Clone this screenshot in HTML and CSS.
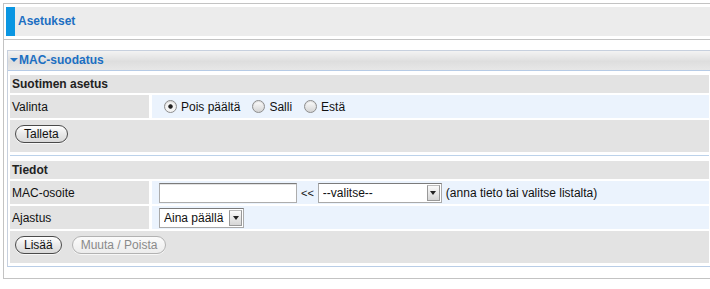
FILE: index.html
```html
<!DOCTYPE html>
<html>
	<head>
		<meta charset="utf-8" />
		<title>Asetukset</title>
		<link rel="stylesheet" href="styles.css">
	</head>
	<body>
<div class="page">
    <div class="top">
        <h1 class="title">Asetukset</h1>
    </div>
    <div class="content">
        <div class="panel">
            <div class="panel-head"><span class="tri"></span>MAC-suodatus</div>
            <div class="panel-body">
                <div class="group first">
                    <div class="group-head">Suotimen asetus</div>
                    <div class="row">
                        <div class="label">Valinta</div>
                        <div class="value radios">
                            <label class="opt"><input type="radio" name="mode" checked>Pois päältä</label>
                            <label class="opt"><input type="radio" name="mode">Salli</label>
                            <label class="opt"><input type="radio" name="mode">Estä</label>
                        </div>
                    </div>
                    <div class="actions">
                        <button class="btn">Talleta</button>
                    </div>
                </div>
                <div class="group">
                    <div class="group-head">Tiedot</div>
                    <div class="row">
                        <div class="label">MAC-osoite</div>
                        <div class="value fields">
                            <input class="text" type="text">
                            <span class="pick">&lt;&lt;</span>
                            <span class="select wide">
                                <select><option>--valitse--</option></select>
                                <span class="caret"></span>
                            </span>
                            <span class="hint">(anna tieto tai valitse listalta)</span>
                        </div>
                    </div>
                    <div class="row">
                        <div class="label">Ajastus</div>
                        <div class="value fields">
                            <span class="select short">
                                <select><option>Aina päällä</option></select>
                                <span class="caret"></span>
                            </span>
                        </div>
                    </div>
                    <div class="actions">
                        <button class="btn">Lisää</button>
                        <button class="btn" disabled>Muuta / Poista</button>
                    </div>
                </div>
            </div>
        </div>
    </div>
</div>
	</body>
</html>
```

FILE: styles.css
```css
* {
    margin: 0;
    padding: 0;
    box-sizing: border-box;
}
body {
    font: 12px "Liberation Sans", Arial, sans-serif;
    color: #111;
    background: #fff;
}
.page {
    margin: 3px 0 0 3px;
    border-top: 1px solid #c3c3c3;
    border-left: 1px solid #c3c3c3;
    border-bottom: 1px solid #c3c3c3;
    overflow: hidden;
}
.top {
    padding: 3px 0 3px 2px;
    border-bottom: 1px solid #c3c3c3;
}
.title {
    height: 29px;
    line-height: 29px;
    background: #ececec;
    border-left: 9px solid #0a96e2;
    padding-left: 3px;
    font-size: 12px;
    font-weight: bold;
    color: #1c6fc2;
}
.content {
    padding: 10px 0 11px 3px;
}
.panel {
    border: 1px solid #c7d0de;
    border-right: none;
    border-bottom-color: #b9cde6;
}
.panel-head {
    height: 20px;
    line-height: 19px;
    padding-left: 2px;
    border-bottom: 1px solid #b6cbe6;
    background: linear-gradient(#f3f3f3, #dedede 55%, #e7e7e7);
    font-weight: bold;
    color: #1c6fc2;
}
.tri {
    display: inline-block;
    width: 0;
    height: 0;
    border-left: 4px solid transparent;
    border-right: 4px solid transparent;
    border-top: 4px solid #1c6fc2;
    margin-right: 1px;
    vertical-align: 2px;
}
.panel-body {
    padding: 4px 1px 3px 2px;
}
.group.first {
    padding-bottom: 3px;
    border-bottom: 1px solid #bcd2ea;
}
.group + .group {
    margin-top: 5px;
}
.group-head {
    height: 18px;
    line-height: 18px;
    padding-left: 2px;
    background: #e3e3e3;
    font-weight: bold;
    color: #222;
}
.row {
    display: flex;
    gap: 3px;
    height: 23px;
    margin-top: 2px;
}
.label {
    width: 139px;
    padding-left: 2px;
    background: #e3e3e3;
    display: flex;
    align-items: center;
}
.value {
    flex: 1;
    background: #ebf3fd;
    display: flex;
    align-items: center;
}
.radios {
    padding-left: 12px;
}
.opt {
    display: flex;
    align-items: center;
    margin-right: 12px;
}
.opt input {
    appearance: none;
    -webkit-appearance: none;
    width: 13px;
    height: 13px;
    margin-right: 4px;
    border-radius: 50%;
    border: 1px solid #8d8d8d;
    background: linear-gradient(#fdfdfd, #d4d4d4);
    box-shadow: inset 0 1px 1px rgba(0,0,0,.12);
}
.opt input:checked {
    background: radial-gradient(circle, #222 0, #222 1.8px, #f4f4f4 2.6px);
}
.fields {
    padding-left: 7px;
}
.text {
    width: 138px;
    height: 20px;
    border: 1px solid #adadad;
    border-top-color: #7b7b7b;
    box-shadow: inset 0 1px 0 #e2e2e2;
    background: #fff;
    outline: none;
}
.pick {
    font-size: 11px;
    margin: 0 4px;
}
.select {
    display: inline-flex;
    height: 20px;
    border: 1px solid #a9a9a9;
    border-top-color: #7b7b7b;
    background: #fff;
}
.select.wide {
    width: 124px;
}
.select.short {
    width: 85px;
}
.select select {
    appearance: none;
    -webkit-appearance: none;
    flex: 1;
    min-width: 0;
    border: none;
    background: transparent;
    padding-left: 4px;
    font: 12px "Liberation Sans", Arial, sans-serif;
    color: #111;
    outline: none;
}
.caret {
    width: 13px;
    margin: 1px 1px 1px 0;
    border: 1px solid #999;
    border-top-color: #bbb;
    background: linear-gradient(#fafafa, #d6d6d6);
    display: flex;
    align-items: center;
    justify-content: center;
}
.caret::after {
    content: "";
    border-left: 3px solid transparent;
    border-right: 3px solid transparent;
    border-top: 4px solid #222;
}
.hint {
    margin-left: 4px;
}
.actions {
    height: 32px;
    margin-top: 2px;
    padding: 5px 0 0 5px;
    background: #e3e3e3;
    display: flex;
    align-items: flex-start;
    gap: 10px;
}
.btn {
    height: 18px;
    padding: 0 8px;
    border: 1px solid #4a4a4a;
    border-radius: 9px;
    background: linear-gradient(#ffffff, #e9e9e9 50%, #d9d9d9);
    box-shadow: 0 1px 0 rgba(255,255,255,.7);
    font: 12px "Liberation Sans", Arial, sans-serif;
    color: #111;
}
.btn:disabled {
    border-color: #b2b2b2;
    color: #8a8a8a;
    background: linear-gradient(#fbfbfb, #ececec);
}
```
